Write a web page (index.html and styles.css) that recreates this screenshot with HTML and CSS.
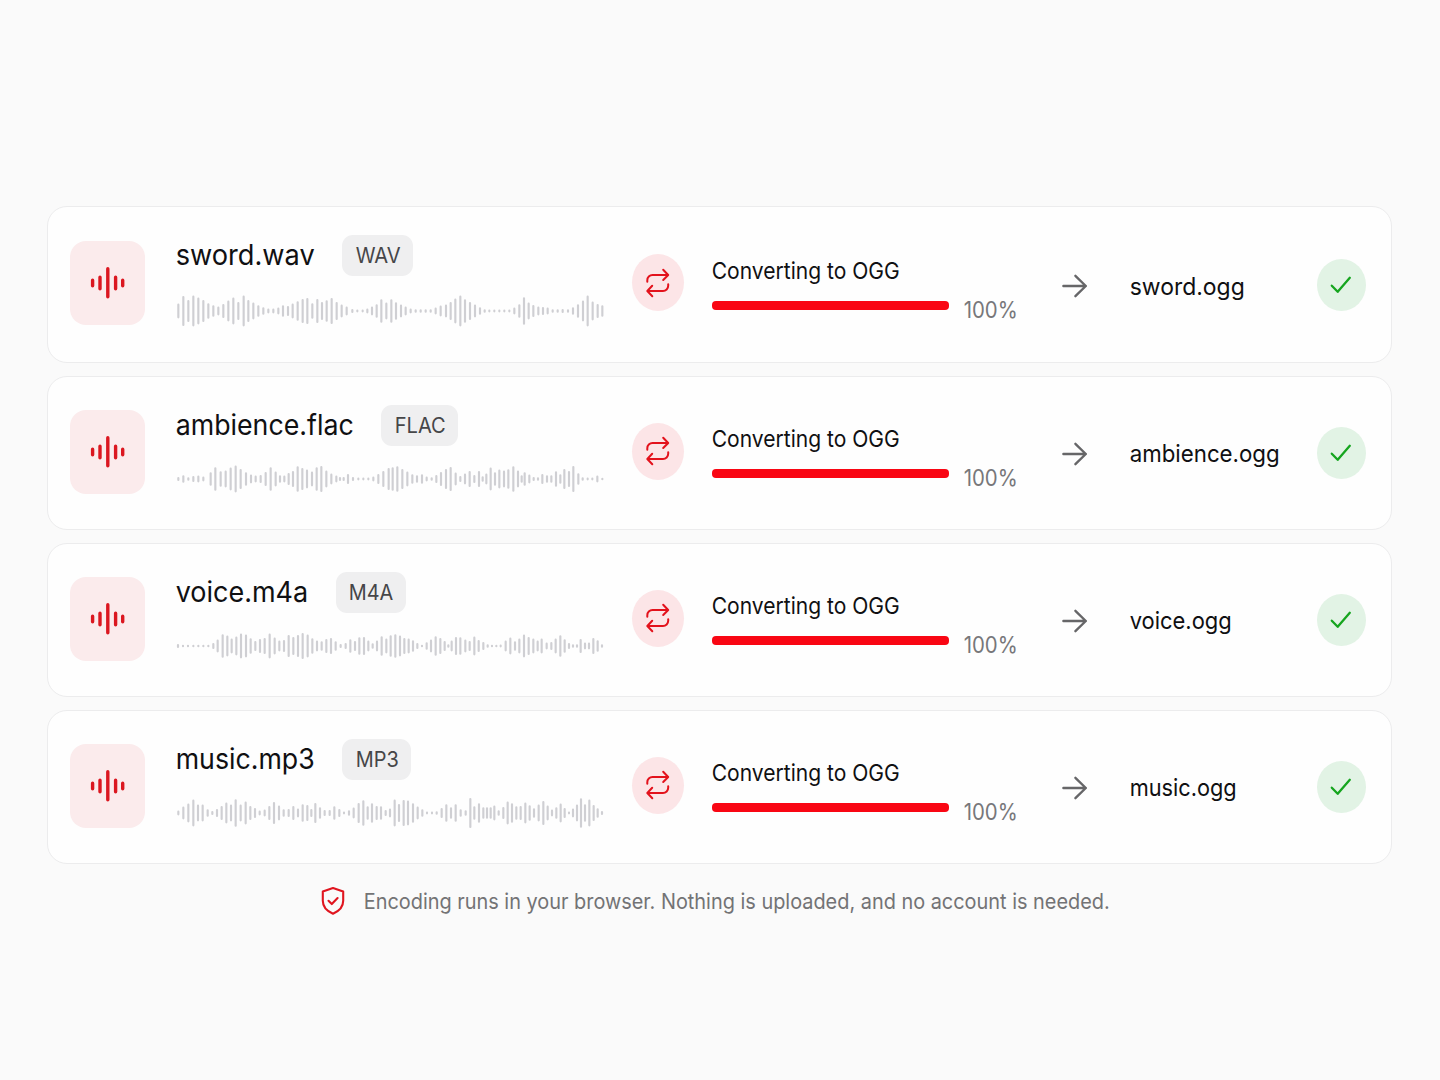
FILE: index.html
```html
<!DOCTYPE html>
<html lang="en">
<head>
<meta charset="utf-8">
<title>Convert to OGG</title>
<link rel="stylesheet" href="styles.css">
</head>
<body>
<svg class="defs" width="0" height="0" aria-hidden="true">
  <symbol id="i-audio" viewBox="0 0 36 34"><path d="M2.6 14.3v5.4M10 11.2v11.6M17.8 2.7v28M25.6 11.2v11.6M32.7 14.3v5.4" fill="none" stroke="currentColor" stroke-width="3.4" stroke-linecap="round"/></symbol>
  <symbol id="i-repeat" viewBox="0 0 26 30"><path d="M2.3 13.8v-1.6a5.2 5.2 0 0 1 5.2-5.2H23M18.2 1.8 23.2 7l-5 5M23.2 16.2v1.6a5.2 5.2 0 0 1-5.2 5.2H2.6M7.2 17.8 2.3 23l5 5.2" fill="none" stroke="currentColor" stroke-width="2" stroke-linecap="round" stroke-linejoin="round"/></symbol>
  <symbol id="i-arrow" viewBox="0 0 26 24"><path d="M1.4 12h22.4M13.4 1.8 23.8 12 13.4 22.2" fill="none" stroke="currentColor" stroke-width="2.4" stroke-linecap="round" stroke-linejoin="round"/></symbol>
  <symbol id="i-check" viewBox="0 0 22 18"><path d="M1.8 9.7 7.7 15.8 19.8 1.8" fill="none" stroke="currentColor" stroke-width="2.3" stroke-linecap="round" stroke-linejoin="round"/></symbol>
  <symbol id="i-shield" viewBox="0 0 24 30"><path d="M12 2 22.2 5.6v9.2c0 6.4-4.2 10.4-10.2 12.9C6 25.200 1.800 21.200 1.800 14.800V5.600ZM7.500 14.800l3.300 3.300 5.800-6" fill="none" stroke="currentColor" stroke-width="2.100" stroke-linecap="round" stroke-linejoin="round"/></symbol>
</svg>
<main class="list">
  <article class="card card-first">
    <div class="tile"><svg class="ic-audio"><use href="#i-audio"/></svg></div>
    <div class="source">
      <div class="title"><span class="name" data-w="138">sword.wav</span><span class="badge"><span data-w="44">WAV</span></span></div>
      <svg class="wave" viewBox="18 0 1302 132" data-bars="25:44 40:90 55:66 70:92 85:80 100:66 115:46 130:34 145:26 160:42 175:62 190:80 205:54 221:92 235:66 250:50 265:34 280:22 295:14 310:14 325:20 339:34 354:30 368:44 383:58 398:72 412:78 427:46 442:72 456:54 470:64 485:78 500:54 515:38 530:26 547:12 562:8 578:8 592:14 606:26 620:40 634:70 649:50 664:70 678:52 693:38 707:26 722:14 737:10 752:10 767:10 782:10 797:20 812:32 828:38 842:54 856:74 871:92 885:70 900:54 915:38 930:22 944:10 958:8 973:8 988:8 1003:8 1018:8 1033:20 1048:40 1062:82 1076:50 1090:36 1105:26 1119:24 1133:20 1148:10 1163:10 1178:12 1194:10 1209:22 1224:40 1239:62 1253:92 1268:56 1283:42 1297:34"></svg>
    </div>
    <div class="swap"><svg class="ic-repeat"><use href="#i-repeat"/></svg></div>
    <div class="status"><span class="label" data-w="187">Converting to OGG</span><div class="progress"><div class="bar"></div><span class="pct" data-w="53">100%</span></div></div>
    <svg class="ic-arrow"><use href="#i-arrow"/></svg>
    <div class="output"><span data-w="114">sword.ogg</span></div>
    <div class="done"><svg class="ic-check"><use href="#i-check"/></svg></div>
  </article>
  <article class="card">
    <div class="tile"><svg class="ic-audio"><use href="#i-audio"/></svg></div>
    <div class="source">
      <div class="title"><span class="name" data-w="177">ambience.flac</span><span class="badge"><span data-w="50">FLAC</span></span></div>
      <svg class="wave" viewBox="18 0 1302 132" data-bars="25:12 40:22 55:10 70:18 85:20 100:14 122:40 136:70 152:46 167:50 182:68 197:80 212:60 228:40 243:26 257:20 272:24 287:42 302:70 317:44 330:22 343:20 356:36 369:48 383:76 397:66 411:56 426:44 440:70 454:78 469:50 484:32 499:20 510:12 521:12 534:30 549:12 565:8 580:8 595:8 610:14 625:30 640:48 656:66 668:70 682:76 697:60 712:44 727:28 741:22 756:28 770:14 785:10 799:24 813:42 828:60 842:72 857:38 871:18 885:32 899:48 913:24 927:48 938:16 949:32 962:68 975:40 988:56 1002:50 1015:58 1030:76 1044:50 1055:22 1064:40 1078:26 1091:12 1104:10 1117:30 1131:22 1144:22 1158:46 1171:28 1183:60 1197:48 1210:78 1225:34 1238:10 1253:8 1267:8 1282:20 1297:6"></svg>
    </div>
    <div class="swap"><svg class="ic-repeat"><use href="#i-repeat"/></svg></div>
    <div class="status"><span class="label" data-w="187">Converting to OGG</span><div class="progress"><div class="bar"></div><span class="pct" data-w="53">100%</span></div></div>
    <svg class="ic-arrow"><use href="#i-arrow"/></svg>
    <div class="output"><span data-w="149">ambience.ogg</span></div>
    <div class="done"><svg class="ic-check"><use href="#i-check"/></svg></div>
  </article>
  <article class="card">
    <div class="tile"><svg class="ic-audio"><use href="#i-audio"/></svg></div>
    <div class="source">
      <div class="title"><span class="name" data-w="131.500">voice.m4a</span><span class="badge"><span data-w="43.500">M4A</span></span></div>
      <svg class="wave" viewBox="18 0 1302 132" data-bars="24:12 39:6 54:6 70:6 85:6 100:6 115:6 130:18 143:38 158:70 172:62 185:44 199:56 213:74 228:68 242:46 256:30 270:42 284:48 299:74 314:50 328:32 342:36 356:66 370:54 384:66 398:78 413:68 427:46 441:32 455:28 469:42 483:48 497:28 512:12 527:18 541:40 555:30 568:52 582:54 595:32 608:16 621:32 635:58 649:44 662:64 676:70 690:62 703:48 716:44 729:34 742:18 756:6 770:22 783:38 797:58 811:48 824:30 835:10 845:32 858:54 871:52 886:38 899:30 913:56 926:36 940:24 953:10 966:6 979:6 992:8 1007:32 1021:50 1035:28 1048:44 1062:68 1076:54 1090:44 1103:32 1115:44 1130:20 1144:24 1157:44 1171:64 1184:40 1197:18 1209:10 1221:10 1232:42 1245:20 1257:20 1270:48 1283:34 1296:10"></svg>
    </div>
    <div class="swap"><svg class="ic-repeat"><use href="#i-repeat"/></svg></div>
    <div class="status"><span class="label" data-w="187">Converting to OGG</span><div class="progress"><div class="bar"></div><span class="pct" data-w="53">100%</span></div></div>
    <svg class="ic-arrow"><use href="#i-arrow"/></svg>
    <div class="output"><span data-w="101">voice.ogg</span></div>
    <div class="done"><svg class="ic-check"><use href="#i-check"/></svg></div>
  </article>
  <article class="card card-last">
    <div class="tile"><svg class="ic-audio"><use href="#i-audio"/></svg></div>
    <div class="source">
      <div class="title"><span class="name" data-w="138">music.mp3</span><span class="badge"><span data-w="42">MP3</span></span></div>
      <svg class="wave" viewBox="18 0 1302 132" data-bars="25:14 40:38 55:56 70:80 84:50 98:50 113:22 127:12 141:24 155:42 169:62 183:50 197:82 212:50 227:68 241:42 255:30 269:14 284:20 298:42 312:66 327:44 341:22 356:24 370:42 384:26 398:52 412:48 424:24 436:60 450:34 464:18 479:18 493:40 508:24 522:8 537:16 551:32 566:60 580:76 593:40 606:58 620:42 633:40 647:18 660:26 674:80 687:54 701:78 714:74 729:58 743:38 757:22 771:8 786:8 800:10 815:30 829:52 843:34 857:52 872:22 887:16 901:90 913:40 927:58 940:34 951:34 962:34 973:44 986:16 1000:36 1013:68 1026:58 1039:40 1052:42 1066:62 1079:46 1092:28 1106:50 1120:72 1133:44 1146:20 1159:34 1172:56 1184:30 1197:8 1209:26 1221:50 1233:88 1245:52 1258:80 1271:48 1283:28 1296:12"></svg>
    </div>
    <div class="swap"><svg class="ic-repeat"><use href="#i-repeat"/></svg></div>
    <div class="status"><span class="label" data-w="187">Converting to OGG</span><div class="progress"><div class="bar"></div><span class="pct" data-w="53">100%</span></div></div>
    <svg class="ic-arrow"><use href="#i-arrow"/></svg>
    <div class="output"><span data-w="106">music.ogg</span></div>
    <div class="done"><svg class="ic-check"><use href="#i-check"/></svg></div>
  </article>
</main>
<footer class="note"><svg class="ic-shield"><use href="#i-shield"/></svg><span data-w="745">Encoding runs in your browser. Nothing is uploaded, and no account is needed.</span></footer>
<script src="script.js"></script>
</body>
</html>
```
FILE: styles.css
```css
* { box-sizing: border-box; }

body {
  margin: 0;
  height: 1080px;
  padding: 206px 48px 0 47px;
  background: #fafafa;
  color: #101012;
  font-family: Inter, "Liberation Sans", sans-serif;
  overflow: hidden;
}

svg { display: block; flex: none; }
.defs { position: absolute; }

.list { display: flex; flex-direction: column; gap: 13px; }

.card {
  --drop: 0px;
  display: grid;
  grid-template-columns: 75px 434px 52px 237px 25px 149px 50px;
  justify-content: start;
  align-items: start;
  height: 154.2px;
  padding-left: 22px;
  border: 1px solid #ececed;
  border-radius: 20px;
  background: #fefefe;
}
.card-first { --drop: 2px; height: 156.5px; }

[data-w] { display: inline-block; white-space: nowrap; transform-origin: 0 50%; }

.tile {
  display: grid;
  place-items: center;
  width: 75px;
  height: 84px;
  margin-top: calc(33px + var(--drop) / 2);
  border-radius: 16px;
  background: #fbebec;
  color: #db1720;
}
.ic-audio { width: 36px; height: 34px; }

.source { margin: 28px 0 0 31px; }
.title { display: flex; align-items: center; gap: 28px; height: 41px; }
.name { font-size: 28.5px; line-height: 38px; margin-top: -1px; }
.badge {
  display: flex;
  align-items: center;
  height: 41px;
  padding: 0 13.5px;
  border-radius: 11px;
  background: #efeff0;
  color: #464648;
  font-size: 20.8px;
}
.wave { width: 434px; height: 44px; margin-top: calc(11.3px + var(--drop)); color: #cfcfd3; }
.card-first .wave { margin-top: 12.8px; }
.card-last .wave { margin-top: 10.7px; }

.swap {
  display: grid;
  place-items: center;
  width: 52px;
  height: 57px;
  margin: calc(46px + var(--drop) / 2) 0 0 53px;
  border-radius: 50%;
  background: #fce5e7;
  color: #e3121c;
}
.ic-repeat { width: 26px; height: 30px; }

.status { margin: calc(46.3px + var(--drop) * 0.75) 0 0 81px; }
.label { display: block; font-size: 22.6px; line-height: 31px; }
.progress { display: flex; gap: 15px; align-items: flex-start; }
.bar { flex: none; width: 237px; height: 9px; margin-top: 15.2px; border-radius: 4px; background: #f90613; }
.pct { color: #77777a; font-size: 22.4px; line-height: 28px; margin-top: 10px; }

.ic-arrow { width: 26px; height: 24px; margin: calc(65px + var(--drop)) 0 0 193.5px; color: #666668; }
.output { margin: calc(61.5px + var(--drop)) 0 0 237px; font-size: 23.8px; line-height: 32px; }

.done {
  display: grid;
  place-items: center;
  width: 49px;
  height: 52px;
  margin: calc(50px + var(--drop)) 0 0 274.5px;
  border-radius: 50%;
  background: #e2f3e5;
  color: #16a51f;
}
.ic-check { width: 22px; height: 18px; }

.note {
  display: flex;
  align-items: center;
  gap: 19px;
  height: 40px;
  margin: 17px 0 0 274px;
  color: #737375;
  font-size: 21.4px;
}
.ic-shield { width: 24px; height: 30px; color: #e0151f; }
```
FILE: script.js
```js
// Draw each waveform as a row of rounded vertical strokes.
document.querySelectorAll('.wave').forEach(function (svg) {
  var d = svg.dataset.bars.split(' ').map(function (bar) {
    var p = bar.split(':').map(Number);
    var half = Math.max(p[1] / 2 - 3, 0.5);
    return 'M' + p[0] + ' ' + (66 - half) + 'v' + half * 2;
  }).join('');
  var path = document.createElementNS('http://www.w3.org/2000/svg', 'path');
  path.setAttribute('d', d);
  path.setAttribute('fill', 'none');
  path.setAttribute('stroke', 'currentColor');
  path.setAttribute('stroke-width', '6.5');
  path.setAttribute('stroke-linecap', 'round');
  svg.appendChild(path);
});

document.querySelectorAll('[data-w]').forEach(function (el) {
  var target = Number(el.dataset.w) + 1;
  var range = document.createRange();
  range.selectNodeContents(el);
  var natural = range.getBoundingClientRect().width;
  el.style.width = el.dataset.w + 'px';
  el.style.transform = 'translateX(-0.3px) scaleX(' + target / natural + ')';
});
```
